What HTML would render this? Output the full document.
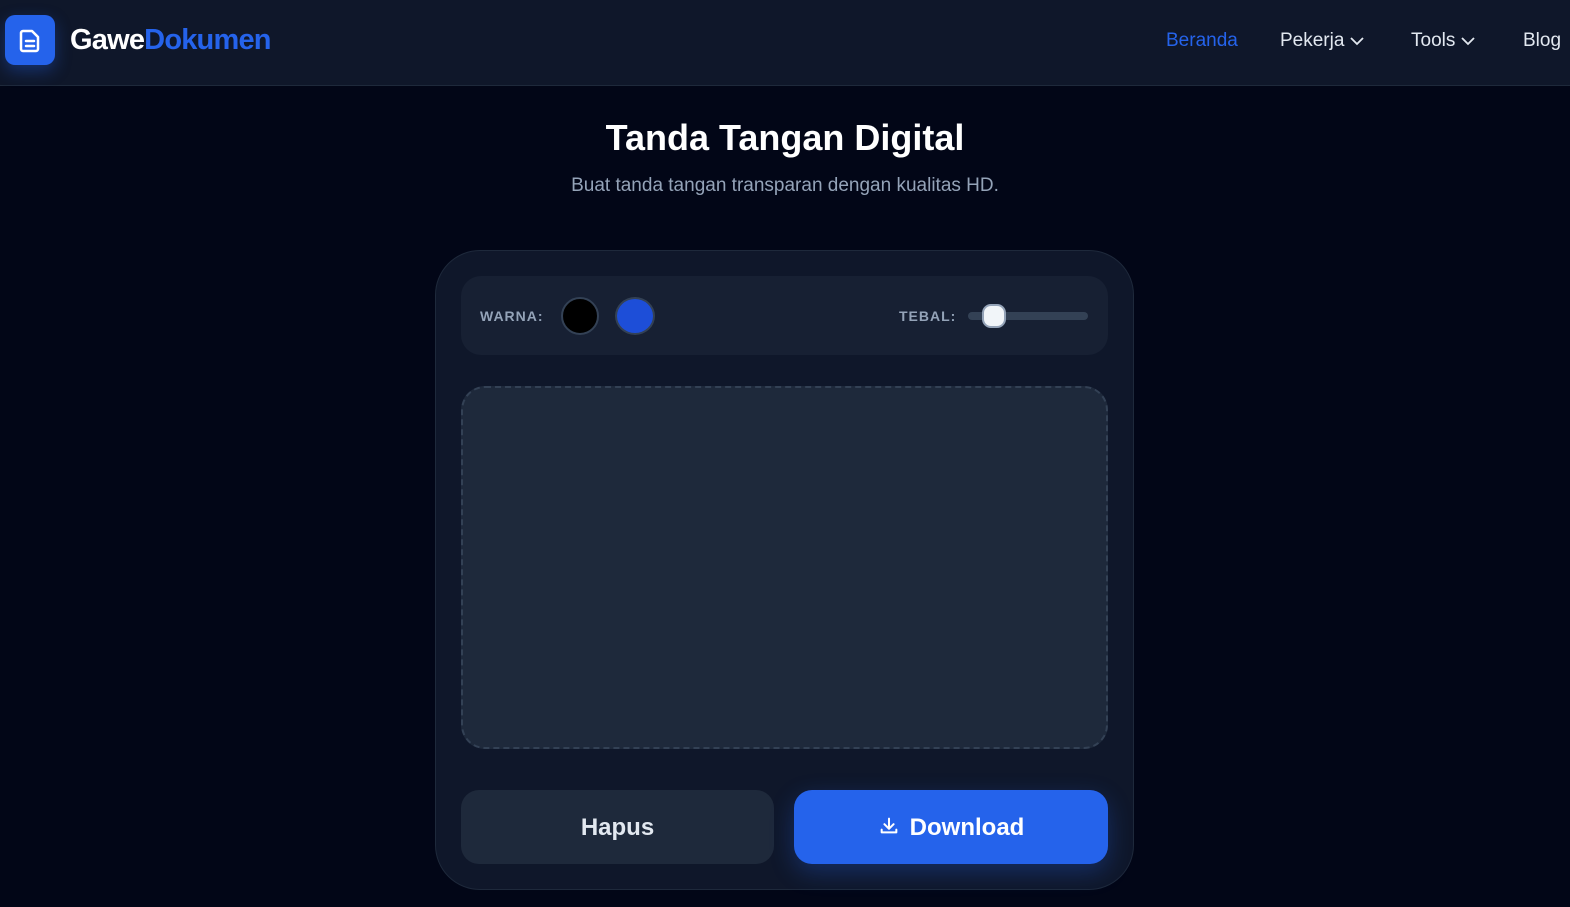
<!DOCTYPE html>
<html><head><meta charset="utf-8"><style>
*{box-sizing:border-box;margin:0;padding:0}
body{width:1570px;height:907px;overflow:hidden;background:#020617;font-family:"Liberation Sans",sans-serif;color:#fff;position:relative}
.hdr{position:absolute;left:0;top:0;width:1570px;height:86px;background:#0f172a;border-bottom:1px solid #1e293b}
.logo{position:absolute;left:5px;top:15px;width:50px;height:50px;border-radius:10px;background:#2563eb;box-shadow:0 6px 16px rgba(37,99,235,.35)}
.brand{position:absolute;left:70px;top:24px;font-size:29px;font-weight:bold;letter-spacing:-0.8px}
.brand span{color:#2563eb}
.nav{position:absolute;top:30px;font-size:19px;color:#e2e8f0}
h1{position:absolute;top:117px;width:100%;text-align:center;font-size:36px;font-weight:bold}
.sub{position:absolute;top:175px;width:100%;text-align:center;font-size:19px;color:#94a3b8}
.card{position:absolute;left:435px;top:250px;width:699px;height:640px;border-radius:45px;background:#0f172a;border:1px solid #1e293b}
.tb{position:absolute;left:461px;top:276px;width:647px;height:79px;border-radius:20px;background:#172033}
.lbl{position:absolute;font-size:14px;font-weight:bold;color:#94a3b8;letter-spacing:1px}
.canvas{position:absolute;left:461px;top:386px;width:647px;height:363px;border-radius:24px;background:#1e293b;border:2px dashed #334155}
.btn{position:absolute;top:790px;height:74px;border-radius:18px;font-size:24px;font-weight:bold;text-align:center;line-height:76px}
</style></head><body>
<div class="hdr">
<div class="logo"><svg width="50" height="50" viewBox="0 0 50 50"><path d="M18 16h9l6 6v12a2 2 0 0 1-2 2H18a2 2 0 0 1-2-2V18a2 2 0 0 1 2-2z" fill="none" stroke="#fff" stroke-width="2.5" stroke-linejoin="round"/><path d="M21 26h8M21 31h8" stroke="#fff" stroke-width="2.5" stroke-linecap="round"/></svg></div>
<div class="brand">Gawe<span>Dokumen</span></div>
<div class="nav" style="left:1166px;color:#2563eb">Beranda</div>
<div class="nav" style="left:1280px">Pekerja <svg width="14" height="10" viewBox="0 0 14 10"><path d="M1 2l6 6 6-6" fill="none" stroke="#e2e8f0" stroke-width="1.8"/></svg></div>
<div class="nav" style="left:1411px">Tools <svg width="14" height="10" viewBox="0 0 14 10"><path d="M1 2l6 6 6-6" fill="none" stroke="#e2e8f0" stroke-width="1.8"/></svg></div>
<div class="nav" style="left:1523px">Blog</div>
</div>
<h1>Tanda Tangan Digital</h1>
<div class="sub">Buat tanda tangan transparan dengan kualitas HD.</div>
<div class="card"></div>
<div class="tb"></div>
<div class="lbl" style="left:480px;top:308px">WARNA:</div>
<div style="position:absolute;left:561px;top:297px;width:38px;height:38px;border-radius:50%;background:#000;border:2px solid #334155"></div>
<div style="position:absolute;left:615px;top:297px;width:40px;height:38px;border-radius:50%;background:#1d4ed8;border:2px solid #334155"></div>
<div class="lbl" style="left:899px;top:308px">TEBAL:</div>
<div style="position:absolute;left:968px;top:312px;width:120px;height:8px;border-radius:4px;background:#334155"></div>
<div style="position:absolute;left:982px;top:304px;width:24px;height:24px;border-radius:9px;background:#f1f5f9;border:2px solid #94a3b8"></div>
<div class="canvas"></div>
<div class="btn" style="left:461px;width:313px;background:#1e293b;color:#e2e8f0">Hapus</div>
<div class="btn" style="left:794px;width:314px;background:#2563eb;box-shadow:0 8px 24px rgba(37,99,235,.3)"><svg width="22" height="22" viewBox="0 0 24 24" style="vertical-align:-2px;margin-right:10px"><path d="M12 4v11M7 10l5 5 5-5M4 16v3h16v-3" fill="none" stroke="#fff" stroke-width="2.2" stroke-linecap="round" stroke-linejoin="round"/></svg>Download</div>
</body></html>
